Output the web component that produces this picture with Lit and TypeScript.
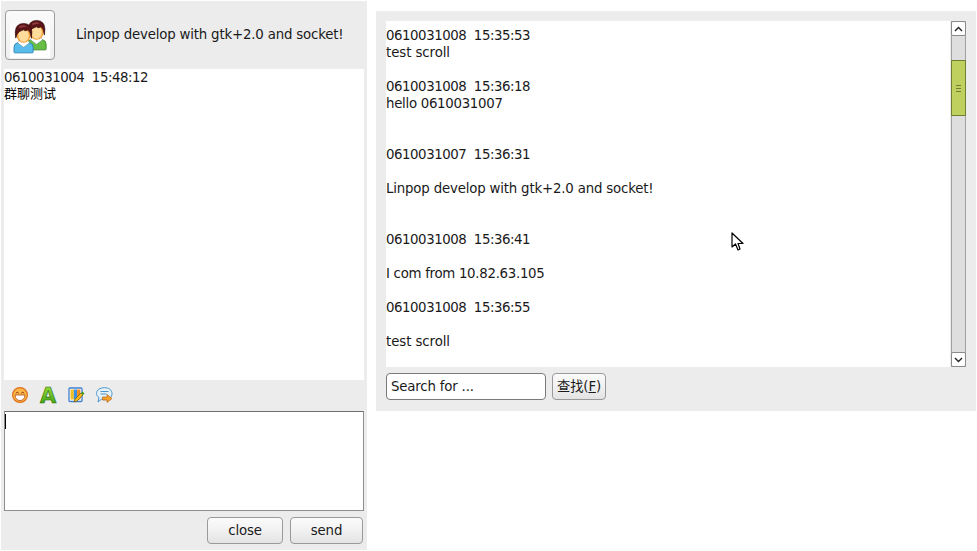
import { LitElement, html, css, svg } from "lit";
import { customElement } from "lit/decorators.js";

const person = (x: number, y: number, shirt: string, edge: string) => svg`
  <g transform="translate(${x} ${y}) scale(.87 .92)">
    <path d="M0 32 v-5 q0-4 4-5 h14 q4 1 4 5 v5 q0 1-1 1 h-20 q-1 0-1-1z" fill="${shirt}" stroke="${edge}" stroke-width="1"/>
    <path d="M4 22 l7 5 l7-5 l-3-3 h-8z" fill="#fff" stroke="#5f7f8f" stroke-width=".5"/>
    <ellipse cx="11" cy="12.500" rx="8.500" ry="9.500" fill="#f6a03c"/>
    <ellipse cx="11" cy="14" rx="6" ry="7" fill="#ffdc9c"/>
    <path d="M2 17 q-3-16 9-16 q12 0 9 16 q-1-7-4-9 q-3 2-5 0 q-3 1-5 2 q-3 2-4 7z" fill="#5a1418" stroke="#2e0a0c" stroke-width=".7"/>
    <path d="M6 4 q5-2 9 0 q-5 1-9 2z" fill="#8e3a3e"/>
  </g>`;

@customElement("app-root")
export class AppRoot extends LitElement {
  static styles = css`
    :host {
      display: flex;
      align-items: flex-start;
      width: 977px;
      height: 551px;
      position: relative;
      overflow: hidden;
      background: #fff;
      font-family: "DejaVu Sans", "Noto Sans CJK SC", sans-serif;
      font-size: 13.33px;
      line-height: 17px;
      letter-spacing: -0.18px;
      color: #1a1a1a;
    }
    .left {
      box-sizing: border-box;
      width: 366px;
      height: 549px;
      margin: 1px 0 0 1px;
      background: #ececec;
      display: flex;
      flex-direction: column;
    }
    .head {
      height: 68px;
      flex: none;
      display: flex;
      align-items: center;
      gap: 21px;
      padding: 0 0 0 4px;
    }
    .title { margin-top: -2px; }
    .avatar {
      box-sizing: border-box;
      width: 50px;
      height: 50px;
      border: 1px solid #9c9c9c;
      border-radius: 4px;
      background: linear-gradient(#fafafa, #efefef);
      display: flex;
      align-items: center;
      justify-content: center;
    }
    .avatar svg { margin-top: 5px; }
    .chat {
      height: 311px;
      margin: 0 3px;
      flex: none;
      background: #fff;
    }
    .line { white-space: pre; height: 17px; }
    .stamp { letter-spacing: -0.45px; }
    .mixed { letter-spacing: -0.29px; }
    .plain { letter-spacing: -0.08px; }
    .cjk { font-size: 13px; line-height: 15px; letter-spacing: 0; color: #000; }
    .tools {
      box-sizing: border-box;
      height: 31px;
      flex: none;
      display: flex;
      align-items: center;
      gap: 12px;
      padding: 0 0 2px 11px;
    }
    .tools svg { display: block; overflow: visible; }
    .input {
      box-sizing: border-box;
      height: 100px;
      flex: none;
      margin: 0 3px;
      background: #fff;
      border: 1px solid #8f8f8f;
      border-top-color: #6e6e6e;
      padding: 2px 1px;
    }
    .caret { width: 1px; height: 15px; background: #000; margin-left: -1px; }
    .actions {
      display: flex;
      justify-content: flex-end;
      gap: 7px;
      padding: 6px 4px 0 0;
    }
    .btn {
      box-sizing: border-box;
      height: 27px;
      border: 1px solid #9a9a9a;
      border-radius: 4px;
      background: linear-gradient(#fbfbfb, #f1f1f1 50%, #e3e3e3);
      display: flex;
      align-items: center;
      justify-content: center;
      color: #1a1a1a;
    }
    .close { width: 76px; }
    .send { width: 73px; }
    .right {
      box-sizing: border-box;
      width: 600px;
      height: 400px;
      margin: 11px 0 0 9px;
      background: #ececec;
      padding: 10px 10px 0;
    }
    .view { display: flex; height: 346px; }
    .log {
      width: 564px;
      flex: none;
      background: #fff;
      padding: 6px 0 0 0;
      box-sizing: border-box;
      overflow: hidden;
    }
    .bar {
      box-sizing: border-box;
      width: 15px;
      margin-left: 1px;
      background: #dedede;
      border-left: 1px solid #a0a0a0;
      border-right: 1px solid #a0a0a0;
      display: flex;
      flex-direction: column;
    }
    .arrow {
      box-sizing: border-box;
      height: 15px;
      flex: none;
      margin: 0 -1px;
      background: #fff;
      border: 1px solid #8a8a8a;
      border-radius: 2px;
      display: flex;
      align-items: center;
      justify-content: center;
    }
    .gap1 { height: 24px; flex: none; }
    .thumb {
      box-sizing: border-box;
      height: 56px;
      flex: none;
      margin: 0 -1px;
      background: #bfd05e;
      border: 1px solid #6f7f33;
      display: flex;
      align-items: center;
      justify-content: center;
    }
    .grip {
      box-sizing: border-box;
      width: 5px;
      height: 7px;
      border-top: 1px solid #6f7f33;
      border-bottom: 1px solid #6f7f33;
      display: flex;
      align-items: center;
    }
    .grip i { display: block; width: 5px; height: 1px; background: #6f7f33; }
    .fill { flex: 1; }
    .find { display: flex; gap: 6px; padding-top: 6px; }
    .search {
      box-sizing: border-box;
      width: 160px;
      height: 27px;
      background: #fff;
      border: 1px solid #7a7a7a;
      border-radius: 4px;
      padding: 0 4px;
      display: flex;
      align-items: center;
    }
    .findbtn { width: 54px; }
    .findbtn u { text-decoration: underline; }
    .cursor { position: absolute; left: 731px; top: 232px; display: block; }
  `;

  private log = [
    "0610031008  15:35:53", "test scroll", "",
    "0610031008  15:36:18", "hello 0610031007", "", "",
    "0610031007  15:36:31", "",
    "Linpop develop with gtk+2.0 and socket!", "", "",
    "0610031008  15:36:41", "",
    "I com from 10.82.63.105", "",
    "0610031008  15:36:55", "",
    "test scroll",
  ];

  private lineClass(l: string) {
    if (/^\d{10} /.test(l)) return "stamp";
    if (/\d\.\d|hello/.test(l) && !l.startsWith("Linpop")) return "mixed";
    if (l === "test scroll") return "plain";
    return "";
  }

  render() {
    return html`
      <section class="left">
        <header class="head">
          <div class="avatar">
            <svg width="40" height="40" viewBox="0 0 40 40">
              <defs>
                <linearGradient id="bg" x1="0" y1="0" x2="0" y2="1"><stop offset="0" stop-color="#fff" stop-opacity="0"/><stop offset=".4" stop-color="#fff"/></linearGradient>
              </defs>
              <rect width="40" height="40" fill="url(#bg)"/>
              ${person(17, 1.5, "#66bf44", "#3a8a28")}
              ${person(4, 4.5, "#58bdea", "#2a82b4")}
            </svg>
          </div>
          <div class="title">Linpop develop with gtk+2.0 and socket!</div>
        </header>
        <div class="chat">
          <div class="line stamp">0610031004  15:48:12</div>
          <div class="line cjk">群聊测试</div>
        </div>
        <div class="tools">
          <svg width="16" height="16" viewBox="0 0 16 16">
            <circle cx="8" cy="8" r="7.400" fill="#fcb848" stroke="#e0701a" stroke-width="1.200"/>
            <path d="M3.800 6.200 q1.500-2 3 0 M9.200 6.200 q1.500-2 3 0" fill="none" stroke="#8a3a10" stroke-width="1"/>
            <path d="M3 8 h10 q-.5 5.500-5 5.500 t-5-5.500z" fill="#fff" stroke="#b04a14" stroke-width=".8"/>
          </svg>
          <svg width="16" height="16" viewBox="0 0 16 16">
            <defs>
              <linearGradient id="ag" x1="0" y1="0" x2="0" y2="1"><stop offset="0" stop-color="#a4e03c"/><stop offset="1" stop-color="#2f9a10"/></linearGradient>
            </defs>
            <text x="8" y="15.500" text-anchor="middle" font-family="DejaVu Sans" font-weight="700" font-size="21" letter-spacing="0" fill="url(#ag)" stroke="#2a6e0c" stroke-width=".6">A</text>
          </svg>
          <svg width="16" height="16" viewBox="0 0 16 16">
            <rect x="1" y="1" width="13" height="13.500" rx="1" fill="#fff" stroke="#3f7fd0" stroke-width="1.300"/>
            <rect x="2.500" y="2.500" width="3.300" height="10" fill="#f4c020"/><rect x="5.800" y="2.500" width="3.300" height="10" fill="#3c8fe0"/><rect x="9.100" y="2.500" width="3.300" height="10" fill="#f08a1c"/>
            <path d="M6 15 l1-3 l6-6 l2 2 l-6 6z" fill="#f8b81c" stroke="#6a5a10" stroke-width=".7"/>
            <path d="M13 6 l1.500-1.500 l2 2 l-1.500 1.500z" fill="#3a9a20"/>
          </svg>
          <svg width="17" height="16" viewBox="0 0 17 16">
            <path d="M8.500 .7 c4.300 0 7.500 2.200 7.500 6 s-3.200 6-7.500 6 c-1 0-2 0-3-.5 l-3.500 2.800 l1-4.500 c-1.500-1-2.500-2.300-2.500-3.800 c0-3.800 3.500-6 8-6z" fill="#e6f2fb" stroke="#4f94c8"/>
            <path d="M4.500 4.500 h8 M4.500 7 h6" stroke="#4f94c8" fill="none"/>
            <path d="M6.500 10 h4.500 v-2.500 l5 4 l-5 4 v-2.500 h-4.500z" fill="#f8a028" stroke="#b0681a" stroke-width=".7"/>
          </svg>
        </div>
        <div class="input"><div class="caret"></div></div>
        <div class="actions">
          <div class="btn close">close</div>
          <div class="btn send">send</div>
        </div>
      </section>
      <section class="right">
        <div class="view">
          <div class="log">
            ${this.log.map((l) => html`<div class="line ${this.lineClass(l)}">${l}</div>`)}
          </div>
          <div class="bar">
            <div class="arrow">
              <svg width="9" height="6" viewBox="0 0 9 6"><path d="M1 5 L4.500 1.500 L8 5" fill="none" stroke="#222" stroke-width="1.400"/></svg>
            </div>
            <div class="gap1"></div>
            <div class="thumb"><div class="grip"><i></i></div></div>
            <div class="fill"></div>
            <div class="arrow">
              <svg width="9" height="6" viewBox="0 0 9 6"><path d="M1 1 L4.500 4.500 L8 1" fill="none" stroke="#222" stroke-width="1.400"/></svg>
            </div>
          </div>
        </div>
        <div class="find">
          <div class="search">Search for ...</div>
          <div class="btn findbtn">查找(<u>F</u>)</div>
        </div>
      </section>
      <svg class="cursor" width="13" height="20" viewBox="0 0 13 20">
        <path d="M1 1 V15 L4.500 12 L7 18 L9 17 L7 11.500 H12 Z" fill="#fff" stroke="#000" stroke-width="1.200" stroke-linejoin="round"/>
      </svg>
    `;
  }
}
